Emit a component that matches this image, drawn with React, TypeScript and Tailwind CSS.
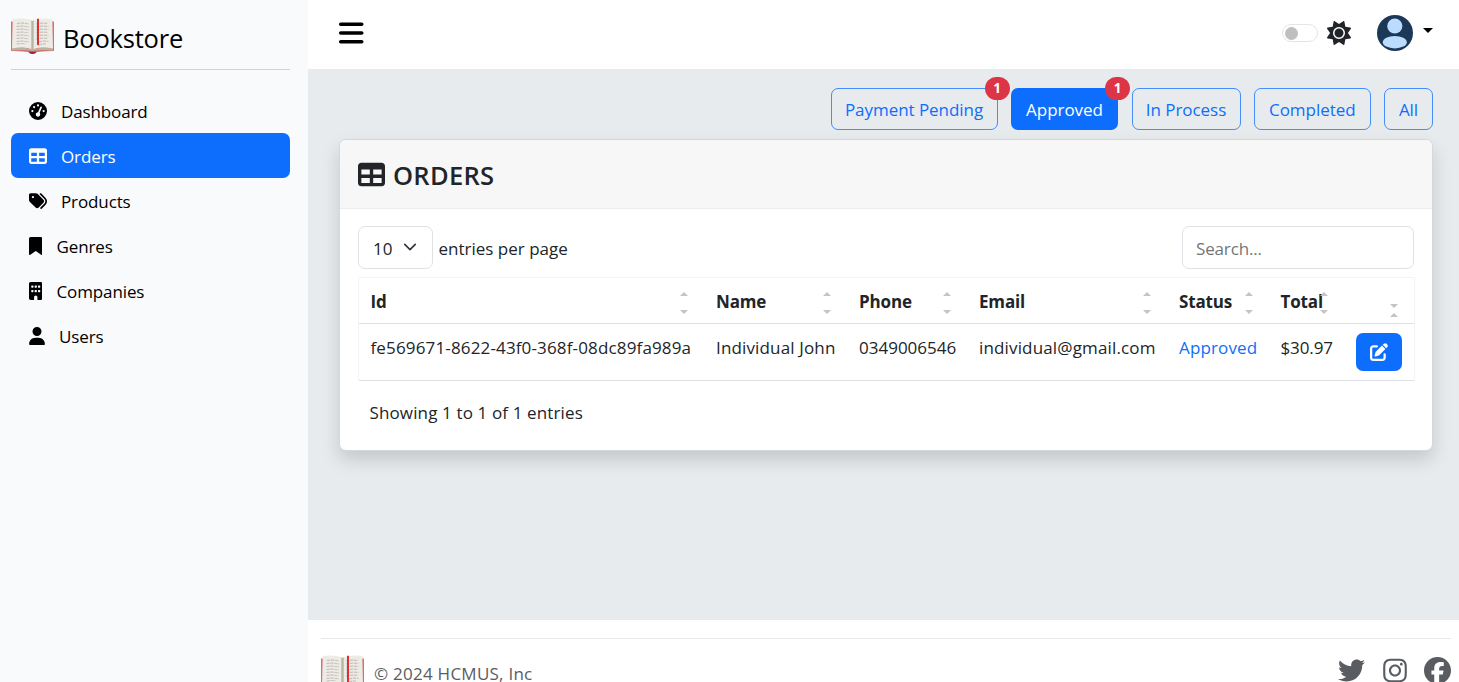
import type { ReactNode } from 'react';
import type { IconType } from 'react-icons';
import {
  FaBars,
  FaBookmark,
  FaBuilding,
  FaFacebook,
  FaGaugeHigh,
  FaInstagram,
  FaPenToSquare,
  FaSun,
  FaTable,
  FaTags,
  FaTwitter,
  FaUser,
} from 'react-icons/fa6';

function BookLogo() {
  return (
    <svg viewBox="0 0 43 36" className="h-9 w-[43px] shrink-0">
      <path d="M0 3.500h43v29.600q-8 .2-17.500.8l-1 1.200q-3 1.500-6 0l-1-1.200Q8 33.300 0 33.100z" fill="#d9706c" />
      <path d="M17.500 33.800h8l-1.200 1.500q-2.800 1.300-5.600 0z" fill="#a91f2b" />
      <path d="M.9 30.500Q14 28.500 21.500 31.500 29 28.500 42.100 30.500V32.400Q28 31.600 21.500 33 15 31.600 .9 32.400z" fill="#b5b5a6" />
      <path d="M1.700 .9Q14-.5 21.500 2.600V31.600Q14 28 1 30.600z" fill="#edebe5" />
      <path d="M41.300 .9Q29-.5 21.500 2.600V31.600Q29 28 42 30.600z" fill="#edebe5" />
      <path d="M20.300 2.200l1.200.7 1.200-.7V31l-1.200.7-1.200-.7z" fill="#b5b5a5" />
      <path
        d="M6 5.500q6-1 12 .5M5.500 8.500q6-1 12.500.5M5.500 11.500q6-1 12.500.5M5.500 14.500q6-1 12 .5M5.500 17.500q6-1 12.500.5M5.500 20.500q6-1 12 .5M5.500 23.500q6-1 12.500.5M5.500 26q5-1 9 0M25 6q6-1.500 12-.5M25 9q6-1.500 12.500-.5M25 12q6-1.500 12.500-.5M25 15q6-1.500 12-.5M25 18q6-1.500 12.500-.5M25 21q6-1.500 12-.5M28 24q5-1.500 9.500-.5M28 27q5-1.500 7-1"
        fill="none"
        stroke="#c9c0ba"
        strokeWidth="1.200"
        strokeDasharray="3.200 .7"
      />
      <path d="M26 .8h2v26.700l-1-.8-1 .8z" fill="#dc2f34" />
    </svg>
  );
}

const navItems: { label: string; icon: IconType; width: string; active?: boolean }[] = [
  { label: 'Dashboard', icon: FaGaugeHigh, width: 'w-[18px]' },
  { label: 'Orders', icon: FaTable, width: 'w-[18px]', active: true },
  { label: 'Products', icon: FaTags, width: 'w-[18px]' },
  { label: 'Genres', icon: FaBookmark, width: 'w-[13.5px]' },
  { label: 'Companies', icon: FaBuilding, width: 'w-[13.5px]' },
  { label: 'Users', icon: FaUser, width: 'w-[16px]' },
];

function Sidebar() {
  return (
    <aside className="flex w-[308px] shrink-0 flex-col bg-[#f8fafc] px-[11px] pr-[18px] text-black">
      <div className="flex h-[70px] items-center gap-[9px] border-b border-[#d0d2d5] pt-[2px]">
        <BookLogo />
        <span className="pt-[4px] text-[25.5px] leading-9 tracking-[-0.2px]">Bookstore</span>
      </div>
      <nav className="flex flex-col pt-[18px]">
        {navItems.map(({ label, icon: Icon, width, active }) => (
          <a
            key={label}
            className={`flex h-[45px] items-center gap-[14.500px] rounded-[7px] pt-px pl-[17.500px] tracking-[-0.12px] ${active ? 'bg-[#0d6efd] text-white' : ''}`}
          >
            <Icon className={`h-[18px] ${width}`} />
            <span>{label}</span>
          </a>
        ))}
      </nav>
    </aside>
  );
}

function TopBar() {
  return (
    <header className="flex h-[69px] items-start justify-between bg-white pr-[26px] pl-[31px]">
      <FaBars className="mt-[19px] h-[28px] w-[24.5px] text-black" />
      <div className="flex items-center pt-[15px]">
        <span className="flex h-[18px] w-9 items-center rounded-full border border-[#e3e6e9] pl-[2px]">
          <span className="h-[13px] w-[13px] rounded-full bg-[#bfbfbf]" />
        </span>
        <FaSun className="ml-[9px] h-6 w-6 text-[#212529]" />
        <svg viewBox="0 0 36 36" className="ml-[26px] h-9 w-9">
          <circle cx="18" cy="18" r="18" fill="#1c3859" />
          <circle cx="17.800" cy="11" r="7.600" fill="#bbdbff" />
          <ellipse cx="17.800" cy="27.200" rx="12" ry="6.200" fill="#bbdbff" />
        </svg>
        <span className="mb-[5px] ml-[10px] h-0 w-0 border-x-[5.5px] border-t-[5.5px] border-x-transparent border-t-black" />
      </div>
    </header>
  );
}

const filters = [
  { label: 'Payment Pending', width: 'w-[167px]', badge: 1 },
  { label: 'Approved', width: 'w-[107px]', badge: 1, active: true },
  { label: 'In Process', width: 'w-[109px]' },
  { label: 'Completed', width: 'w-[116.5px]' },
  { label: 'All', width: 'w-[49px]' },
];

function Filters() {
  return (
    <div className="flex justify-end gap-[13.500px]">
      {filters.map(({ label, width, badge, active }) => (
        <button
          key={label}
          className={`relative flex h-[42px] items-center justify-center rounded-[7px] border border-[#0d6efd]/75 tracking-[-0.05px] whitespace-nowrap ${width} ${active ? 'bg-[#0d6efd] text-white' : 'text-[#0d6efd]'}`}
        >
          {label}
          {badge && (
            <span className="absolute -top-[12px] -right-[13px] flex h-[23px] w-[25px] items-center justify-center rounded-full bg-[#dc3545] text-[13.500px] font-bold text-white">
              {badge}
            </span>
          )}
        </button>
      ))}
    </div>
  );
}

function SortArrows({ inverted }: { inverted?: boolean }) {
  const up = <span className="h-0 w-0 border-x-[4.5px] border-b-[4.5px] border-x-transparent border-b-[#c4c4c5]" />;
  const down = <span className="h-0 w-0 border-x-[4.5px] border-t-[4.5px] border-x-transparent border-t-[#c4c4c5]" />;
  return (
    <span
      className={`absolute flex flex-col ${inverted ? 'top-[26px] right-[16.500px] gap-[5px]' : 'top-[14px] right-[16px] gap-[14px]'}`}
    >
      {inverted ? down : up}
      {inverted ? up : down}
    </span>
  );
}

const columns = [
  { title: 'Id', width: 'w-[345px]' },
  { title: 'Name', width: 'w-[143px]' },
  { title: 'Phone', width: 'w-[120px]' },
  { title: 'Email', width: 'w-[200px]' },
  { title: 'Status', width: 'w-[101.5px]' },
  { title: 'Total', width: 'w-[75.5px]' },
  { title: '', width: 'w-[70px]' },
];

function Cell({ children, className = 'tracking-[0.15px]' }: { children: ReactNode; className?: string }) {
  return <td className={`pt-[10px] pl-[12px] align-top whitespace-nowrap first:pl-[11.500px] ${className}`}>{children}</td>;
}

function OrdersTable() {
  return (
    <table className="mt-2 w-full table-fixed border-separate border-spacing-0 border-x border-t border-[#f4f4f5]">
      <thead>
        <tr className="h-[46px]">
          {columns.map(({ title, width }) => (
            <th
              key={title}
              className={`relative border-b border-[#dee2e6] pt-[2px] pl-[12px] text-left font-bold tracking-[-0.15px] first:pl-[11.500px] ${width}`}
            >
              {title}
              <SortArrows inverted={!title} />
            </th>
          ))}
        </tr>
      </thead>
      <tbody>
        <tr className="h-[57px] *:border-b *:border-[#dee2e6]">
          <Cell>fe569671-8622-43f0-368f-08dc89fa989a</Cell>
          <Cell>Individual John</Cell>
          <Cell className="tracking-[0]">0349006546</Cell>
          <Cell>individual@gmail.com</Cell>
          <Cell className="tracking-[0.15px] text-[#0d6efd]">Approved</Cell>
          <Cell className="tracking-[-0.1px]">$30.97</Cell>
          <td className="pt-[9px] pl-[11.500px] align-top">
            <button className="flex h-[38px] w-[46.500px] items-center justify-center rounded-[7px] bg-[#0d6efd] text-white">
              <FaPenToSquare className="h-[18px] w-[18px]" />
            </button>
          </td>
        </tr>
      </tbody>
    </table>
  );
}

function OrdersCard() {
  return (
    <section className="mt-[9px] h-[312px] rounded-[7px] border border-[#d5d8db] bg-white shadow-[0_9px_18px_rgba(0,0,0,0.15)]">
      <div className="flex h-[69px] items-center gap-[8px] rounded-t-[6px] border-b border-[#ececec] bg-[#f7f7f7] pt-px pl-[18px]">
        <FaTable className="h-[27px] w-[27px]" />
        <h2 className="text-[25.5px] leading-9 font-semibold tracking-[0.3px]">ORDERS</h2>
      </div>
      <div className="px-[18px] pt-[17px]">
        <div className="flex items-center justify-between">
          <div className="flex items-center gap-[5.500px]">
            <div className="flex h-[43px] w-[75px] items-center justify-between rounded-[7px] border border-[#dee2e6] pt-[2px] pr-[15px] pl-[14px]">
              10
              <svg viewBox="0 0 16 16" className="mb-[3px] h-[14px] w-[14px]">
                <path d="m2 5 6 6 6-6" fill="none" stroke="#343a40" strokeWidth="2" strokeLinecap="round" strokeLinejoin="round" />
              </svg>
            </div>
            <span className="pt-[2px]">entries per page</span>
          </div>
          <input
            placeholder="Search..."
            className="h-[43px] w-[232px] rounded-[7px] border border-[#dee2e6] pt-[2px] pl-[13px] tracking-[-0.15px] outline-none placeholder:text-[#757575]"
          />
        </div>
        <OrdersTable />
        <p className="pt-[18px] pl-[11.500px] tracking-[0.13px]">Showing 1 to 1 of 1 entries</p>
      </div>
    </section>
  );
}

function Footer() {
  return (
    <footer className="h-[62px] shrink-0 bg-white pt-[18px] pr-2 pl-[13px]">
      <div className="flex items-start justify-between border-t border-[#e6e8ea] pt-[16px] text-[#595d61]">
        <div className="flex gap-[10px]">
          <BookLogo />
          <span className="pt-[5px] tracking-[0.25px]">© 2024 HCMUS, Inc</span>
        </div>
        <div className="flex gap-[17.500px] pt-[1.5px]">
          <FaTwitter className="h-[27px] w-[27px]" />
          <FaInstagram className="h-[27px] w-[24px]" />
          <FaFacebook className="h-[27px] w-[27px]" />
        </div>
      </div>
    </footer>
  );
}

export default function App() {
  return (
    <div className="flex h-[682px] w-[1459px] overflow-hidden bg-[#e7ebee] font-['Open_Sans','Noto_Sans',sans-serif] text-[17px] leading-[27px] text-[#212529]">
      <Sidebar />
      <div className="flex min-w-0 flex-1 flex-col">
        <TopBar />
        <main className="flex-1 pt-[19px] pr-[26px] pl-[31px]">
          <Filters />
          <OrdersCard />
        </main>
        <Footer />
      </div>
    </div>
  );
}
